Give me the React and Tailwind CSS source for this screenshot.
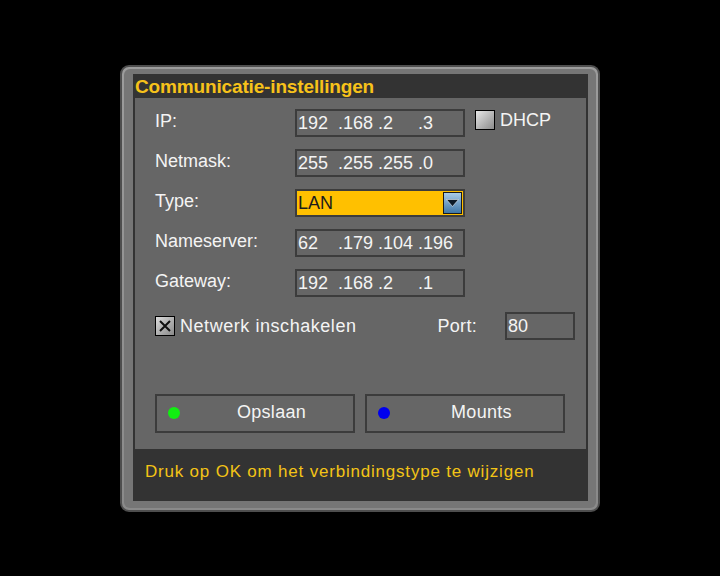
const font = { fontFamily: '"Liberation Sans", Arial, sans-serif' };

function Field({ parts, className = '' }) {
  return (
    <div className={`flex items-center h-[28px] border-2 border-[#3c3c3c] bg-[#666] pl-[1px] text-[18px] text-[#f4f4f4] ${className}`}>
      {parts.map((p, i) => (
        <span key={i} className="w-[40px] shrink-0 leading-none">{p}</span>
      ))}
    </div>
  );
}

function Label({ children }) {
  return <div className="w-[140px] shrink-0 text-[18px] text-[#f4f4f4] leading-none -mt-[4px]">{children}</div>;
}

export default function App() {
  return (
    <div className="w-[720px] h-[576px] bg-black flex items-center justify-center" style={font}>
      <div className="w-[480px] h-[447px] rounded-[9px] bg-[#4e4e4e] p-[2px]">
        <div className="h-full rounded-[7px] bg-gradient-to-b from-[#9c9c9c] to-[#8a8a8a] p-[2px]">
          <div className="h-full rounded-[6px] bg-[#767676] pt-[5px] pl-[9px] pr-[8px] pb-[7px]">
            <div className="h-full bg-[#333] flex flex-col px-[2px]">
              <div className="h-[24px] flex items-center pt-[3px] text-[19px] font-bold text-[#f7c21a] tracking-[-0.15px]">
                Communicatie-instellingen
              </div>
              <div className="bg-[#666] h-[351px] pl-[20px] pt-[11px] flex flex-col">
                <div className="flex items-center h-[28px] mb-[12px]">
                  <Label>IP:</Label>
                  <Field className="w-[170px]" parts={['192', '.168', '.2', '.3']} />
                  <div className="ml-[10px] w-[20px] h-[20px] border border-black bg-gradient-to-br from-[#e8e8e8] to-[#8c8c8c] -mt-[6px]" />
                  <span className="ml-[5px] text-[18px] text-[#f4f4f4] leading-none -mt-[5px]">DHCP</span>
                </div>
                <div className="flex items-center h-[28px] mb-[12px]">
                  <Label>Netmask:</Label>
                  <Field className="w-[170px]" parts={['255', '.255', '.255', '.0']} />
                </div>
                <div className="flex items-center h-[28px] mb-[12px]">
                  <Label>Type:</Label>
                  <div className="w-[170px] h-[28px] border-2 border-[#3c3c3c] bg-[#ffc000] flex items-center justify-between pl-[1px] pr-[1px]">
                    <span className="text-[18px] text-[#1c1c1c] leading-none">LAN</span>
                    <div className="w-[19px] h-[22px] border border-[#1a1a1a] bg-gradient-to-b from-[#a9cbe6] to-[#3f77a6] flex items-center justify-center">
                      <svg width="13" height="8" viewBox="0 0 13 8">
                        <polygon points="0.5,0.5 12.5,0.5 6.5,7.5" fill="#0d1a26" stroke="#e8f0f8" strokeWidth="0.6" />
                      </svg>
                    </div>
                  </div>
                </div>
                <div className="flex items-center h-[28px] mb-[12px]">
                  <Label>Nameserver:</Label>
                  <Field className="w-[170px]" parts={['62', '.179', '.104', '.196']} />
                </div>
                <div className="flex items-center h-[28px]">
                  <Label>Gateway:</Label>
                  <Field className="w-[170px]" parts={['192', '.168', '.2', '.1']} />
                </div>
                <div className="flex items-center h-[28px] mt-[15px]">
                  <div className="w-[20px] h-[20px] border border-black bg-gradient-to-br from-[#dcdcdc] to-[#8a8a8a] flex items-center justify-center">
                    <svg width="14" height="14" viewBox="0 0 14 14">
                      <path d="M2 2 L12 12 M12 2 L2 12" stroke="#111" strokeWidth="2" />
                    </svg>
                  </div>
                  <span className="ml-[5px] text-[18px] text-[#f4f4f4] leading-none tracking-[0.55px]">Netwerk inschakelen</span>
                  <span className="ml-auto text-[18px] text-[#f4f4f4] leading-none tracking-[0.3px]">Port:</span>
                  <div className="ml-[28px] mr-[11px] w-[70px] h-[28px] border-2 border-[#3c3c3c] flex items-center pl-[1px] text-[18px] text-[#f4f4f4] leading-none">
                    80
                  </div>
                </div>
                <div className="flex gap-[10px] mt-[54px]">
                  {[
                    { label: 'Opslaan', dot: 'bg-[#11ee11]' },
                    { label: 'Mounts', dot: 'bg-[#0000ee]' },
                  ].map((b) => (
                    <div key={b.label} className="w-[200px] h-[39px] border-2 border-[#3c3c3c] flex items-center pl-[11px]">
                      <span className={`w-[12px] h-[12px] rounded-full ${b.dot}`} />
                      <span className="flex-1 text-center pl-[10px] text-[18px] text-[#f4f4f4] leading-none -mt-[3px] tracking-[0.3px]">{b.label}</span>
                    </div>
                  ))}
                </div>
              </div>
              <div className="flex-1 flex items-center pl-[10px] pb-[6px] text-[17px] text-[#f3c416] tracking-[0.8px]">
                Druk op OK om het verbindingstype te wijzigen
              </div>
            </div>
          </div>
        </div>
      </div>
    </div>
  );
}
